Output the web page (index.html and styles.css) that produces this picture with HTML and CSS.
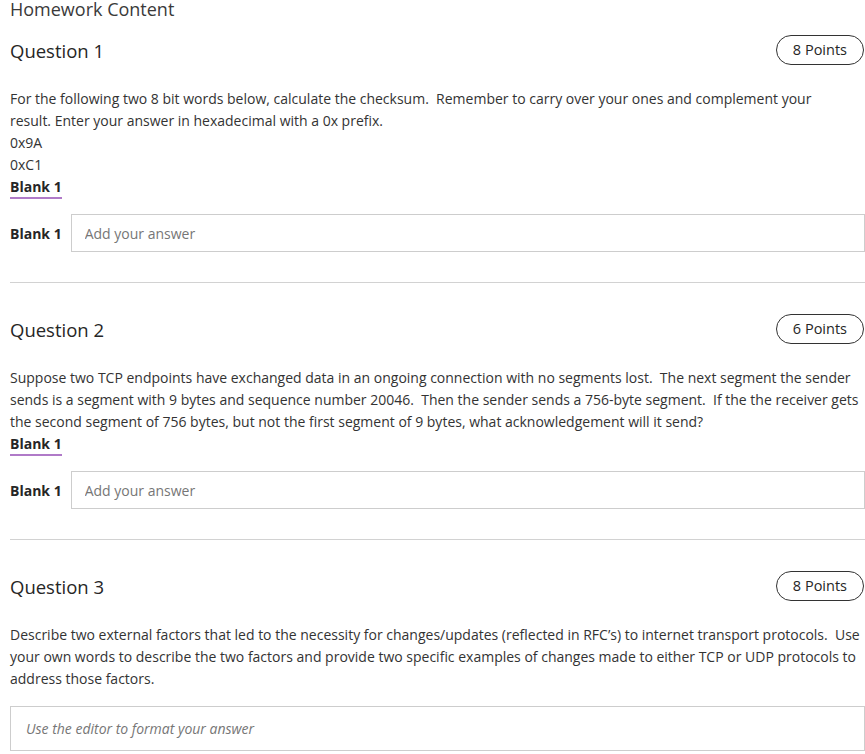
FILE: index.html
```html
<!DOCTYPE html>
<html lang="en">
<head>
    <meta charset="UTF-8">
    <title>Homework Content</title>
    <link rel="stylesheet" href="styles.css">
</head>
<body>
    <div class="page">
        <h1 class="page-title">Homework Content</h1>

        <div class="question">
            <div class="question-head">
                <h2>Question 1</h2>
                <span class="points">8 Points</span>
            </div>
            <div class="question-text">
                <p>For the following two 8 bit words below, calculate the checksum.&nbsp; Remember to carry over your ones and complement your<br>result. Enter your answer in hexadecimal with a 0x prefix.</p>
                <p>0x9A</p>
                <p>0xC1</p>
                <span class="blank-ref">Blank 1</span>
            </div>
            <div class="answer-row">
                <label>Blank 1</label>
                <input type="text" placeholder="Add your answer">
            </div>
        </div>

        <div class="question">
            <div class="question-head">
                <h2>Question 2</h2>
                <span class="points">6 Points</span>
            </div>
            <div class="question-text">
                <p>Suppose two TCP endpoints have exchanged data in an ongoing connection with no segments lost.&nbsp; The next segment the sender sends is a segment with 9 bytes and sequence number 20046.&nbsp; Then the sender sends a 756-byte segment.&nbsp; If the the receiver gets the second segment of 756 bytes, but not the first segment of 9 bytes, what acknowledgement will it send?</p>
                <span class="blank-ref">Blank 1</span>
            </div>
            <div class="answer-row">
                <label>Blank 1</label>
                <input type="text" placeholder="Add your answer">
            </div>
        </div>

        <div class="question">
            <div class="question-head">
                <h2>Question 3</h2>
                <span class="points">8 Points</span>
            </div>
            <div class="question-text">
                <p>Describe two external factors that led to the necessity for changes/updates (reflected in RFC’s) to internet transport protocols.&nbsp; Use your own words to describe the two factors and provide two specific examples of changes made to either TCP or UDP protocols to address those factors.</p>
            </div>
            <div class="editor">Use the editor to format your answer</div>
        </div>
    </div>
</body>
</html>
```

FILE: styles.css
```css
body {
    font-family: "Open Sans", "Noto Sans", sans-serif;
    color: #333333;
    background: #FFFFFF;
    margin: 0;
    padding: 0;
    overflow: hidden;
}
.page {
    width: 855px;
    padding-left: 10px;
}
.page-title {
    font-size: 18px;
    font-weight: 400;
    line-height: 24px;
    color: #3a3a3a;
    margin: -3px 0 0;
}
.question {
    padding: 14px 0 30px;
}
.question + .question {
    border-top: 1px solid #d2d2d2;
    padding-top: 31px;
}
.question-head {
    display: flex;
    justify-content: space-between;
    align-items: center;
}
.question-head h2 {
    font-size: 18.5px;
    font-weight: 400;
    color: #262626;
    margin: 0;
}
.points {
    height: 28px;
    line-height: 28px;
    padding: 0 16px;
    border: 1px solid #333333;
    border-radius: 15px;
    font-size: 14.5px;
    color: #262626;
    margin-right: 1px;
}
.question-text {
    margin-top: 23px;
    font-size: 14px;
    line-height: 22px;
}
.question-text p {
    margin: 0;
}
.blank-ref {
    display: inline-block;
    font-weight: 700;
    line-height: 20px;
    border-bottom: 2px solid #b07ac8;
    color: #262626;
}
.answer-row {
    display: flex;
    align-items: center;
    gap: 9px;
    margin-top: 15px;
}
.answer-row label {
    font-size: 14px;
    font-weight: 700;
    color: #262626;
}
.answer-row input {
    flex: 1;
    height: 38px;
    box-sizing: border-box;
    border: 1px solid #cdcdcd;
    padding: 0 13px;
    font-family: "Open Sans", "Noto Sans", sans-serif;
    font-size: 14px;
    color: #333333;
    margin: 0;
}
.answer-row input::placeholder {
    color: #767676;
}
.editor {
    margin-top: 16px;
    height: 45px;
    box-sizing: border-box;
    border: 1px solid #cdcdcd;
    padding: 0 15px;
    display: flex;
    align-items: center;
    font-size: 14px;
    font-style: italic;
    color: #767676;
}
```
